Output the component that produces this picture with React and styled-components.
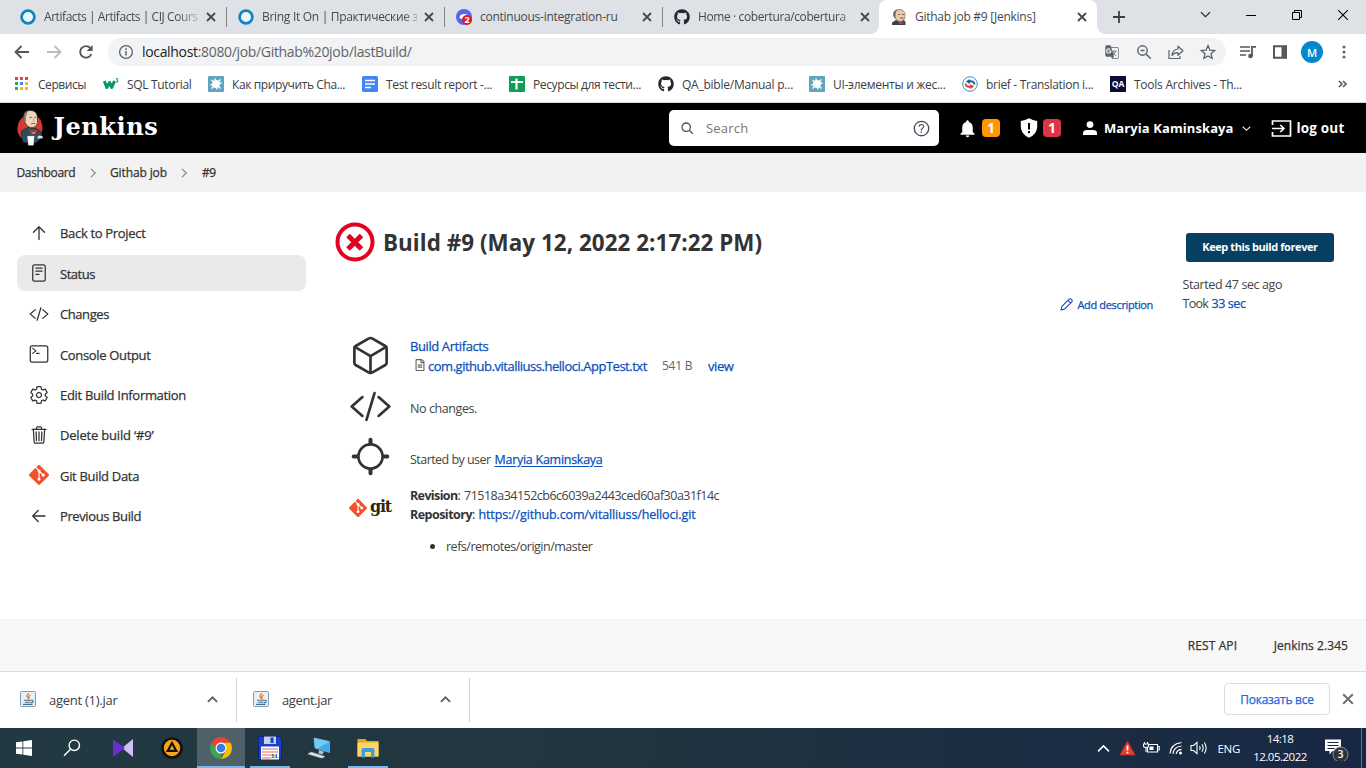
import React from "react";
import styled, { createGlobalStyle, css } from "styled-components";
import {
  IoReaderOutline,
  IoCodeSlashOutline,
  IoTerminalOutline,
  IoSettingsOutline,
  IoTrashOutline,
  IoCubeOutline,
  IoLocateOutline,
  IoHelpCircleOutline,
} from "react-icons/io5";
import { MdNotifications, MdOutlineGTranslate } from "react-icons/md";
import { FaGithub, FaRegFileAlt } from "react-icons/fa";
import { SiGit } from "react-icons/si";

const GlobalStyle = createGlobalStyle`
  * { box-sizing: border-box; }
  body {
    margin: 0;
    background: #fff;
    color: #333;
    font-family: "Open Sans", "Noto Sans", sans-serif;
    overflow: hidden;
  }
  svg { display: block; flex: none; }
`;

const Screen = styled.div`
  width: 1366px;
  height: 768px;
  display: flex;
  flex-direction: column;
`;

const Text = styled.span`
  font-size: ${(p) => p.$size || 12}px;
  font-weight: ${(p) => p.$weight || 400};
  letter-spacing: ${(p) => p.$track || 0}px;
  color: ${(p) => p.$color || "inherit"};
  white-space: nowrap;
  ${(p) => p.$medium && css`-webkit-text-stroke: 0.25px currentColor;`}
`;

/* ---------- browser tabs ---------- */

const TabStrip = styled.div`
  height: 34px;
  flex: none;
  background: #dee1e6;
  display: flex;
  padding-left: 9px;
  color: #45494d;
`;

const Tab = styled.div`
  width: ${(p) => p.$width || 218}px;
  height: 34px;
  display: flex;
  align-items: center;
  padding-left: 11px;
  position: relative;
  ${(p) =>
    p.$active
      ? css`
          background: #fff;
          border-radius: 8px 8px 0 0;
          padding-left: 12px;
          &::before, &::after {
            content: "";
            position: absolute;
            bottom: 0;
            width: 8px;
            height: 8px;
          }
          &::before { left: -8px; background: radial-gradient(circle at 0 0, transparent 7.5px, #fff 8px); }
          &::after { right: -8px; background: radial-gradient(circle at 100% 0, transparent 7.5px, #fff 8px); }
        `
      : !p.$last &&
        css`
          &::after {
            content: "";
            position: absolute;
            right: 0;
            top: 7px;
            width: 1px;
            height: 20px;
            background: #808387;
          }
        `}
`;

const TabTitle = styled.div`
  width: 155px;
  margin-left: 8px;
  display: flex;
  line-height: 20px;
  ${(p) => p.$fade && css`mask-image: linear-gradient(90deg, #000 ${p.$fade}px, transparent 162px);`}
`;

const TabClose = styled.div`
  margin-left: 6.5px;
`;

const NewTab = styled.div`
  width: 44px;
  display: flex;
  align-items: center;
  justify-content: center;
`;

const WindowButtons = styled.div`
  margin-left: auto;
  display: flex;
  height: 29px;
`;

const WindowButton = styled.div`
  width: 46px;
  display: flex;
  align-items: center;
  justify-content: center;
`;

/* ---------- toolbar and bookmarks ---------- */

const Toolbar = styled.div`
  height: 36px;
  flex: none;
  display: flex;
  align-items: center;
  padding-left: 12px;
`;

const NavButton = styled.div`
  width: 20px;
  height: 20px;
  margin-right: 12px;
  display: flex;
  align-items: center;
  justify-content: center;
`;

const AddressBar = styled.div`
  width: 1118px;
  height: 28px;
  border-radius: 14px;
  background: #f1f3f4;
  display: flex;
  align-items: center;
  padding: 0 9px 0 10px;
`;

const AddressText = styled.div`
  margin: -1px 0 0 8px;
  line-height: 20px;
  display: flex;
`;

const AddressActions = styled.div`
  margin-left: auto;
  display: flex;
  align-items: center;
  gap: 14px;
  svg { width: 18px; }
`;

const ToolbarActions = styled.div`
  display: flex;
  align-items: center;
  padding-left: 10px;
`;

const Avatar = styled.div`
  width: 22px;
  height: 22px;
  border-radius: 50%;
  background: #0288d1;
  color: #fff;
  display: flex;
  align-items: center;
  justify-content: center;
  margin: 0 19px 0 13px;
`;

const Bookmarks = styled.div`
  height: 33px;
  flex: none;
  border-bottom: 1px solid #dadce0;
  display: flex;
  padding: 0 0 4px 13px;
  color: #3c4043;
`;

const Bookmark = styled.div`
  width: ${(p) => p.$width}px;
  display: flex;
  align-items: center;
  gap: ${(p) => p.$gap || 8}px;
`;

/* ---------- Jenkins header ---------- */

const Header = styled.header`
  height: 50px;
  flex: none;
  background: #000;
  color: #fff;
  display: flex;
  align-items: center;
  padding-left: 16px;
`;

const Brand = styled.div`
  margin: -2px 0 0 9.5px;
  width: 615.5px;
  font: 700 24px/46px "DejaVu Serif", serif;
  letter-spacing: 0.6px;
`;

const SearchBox = styled.div`
  width: 270px;
  height: 36px;
  border-radius: 5px;
  background: #fff;
  display: flex;
  align-items: center;
  padding: 0 7px 0 12px;
`;

const SearchHint = styled.div`
  flex: 1;
  margin: -1px 0 0 12px;
  line-height: 36px;
`;

const HeaderItem = styled.div`
  display: flex;
  align-items: center;
  margin-left: ${(p) => p.$left}px;
  width: ${(p) => p.$width}px;
`;

const Badge = styled.div`
  width: 18px;
  height: 18px;
  border-radius: 4px;
  background: ${(p) => p.$color};
  font-size: 14px;
  font-weight: 700;
  line-height: 18px;
  text-align: center;
  margin-left: ${(p) => p.$left}px;
`;

const Breadcrumbs = styled.nav`
  height: 39px;
  flex: none;
  background: #f2f2f2;
  display: flex;
  align-items: center;
  padding-left: 16.5px;
`;

const Crumb = styled.div`
  width: ${(p) => p.$width}px;
  line-height: 39px;
  display: flex;
`;

const CrumbSeparator = styled.div`
  width: ${(p) => p.$width}px;
`;

/* ---------- page body ---------- */

const Page = styled.main`
  height: 427px;
  flex: none;
  display: flex;
`;

const Sidebar = styled.aside`
  width: 335px;
  padding: 22.8px 29px 0 17px;
  display: flex;
  flex-direction: column;
  gap: 4.45px;
`;

const SideItem = styled.div`
  height: 36px;
  flex: none;
  border-radius: 8px;
  background: ${(p) => (p.$active ? "#eaeaea" : "transparent")};
  display: flex;
  align-items: center;
  padding-left: 12px;
  gap: 11px;
`;

const SideLabel = styled.div`
  padding-top: 1px;
  line-height: 20px;
  display: flex;
`;

const BuildPanel = styled.section`
  width: 819px;
  padding-top: 30px;
`;

const TitleRow = styled.div`
  height: 40px;
  display: flex;
  align-items: center;
  gap: 8px;
`;

const Title = styled.h1`
  margin: 0;
  padding-top: 2px;
  font-size: 22.4px;
  font-weight: 700;
  line-height: 30px;
  letter-spacing: 0.05px;
`;

const DescriptionRow = styled.div`
  margin: 32px 1px 20px 0;
  height: 20px;
  display: flex;
  align-items: center;
  justify-content: flex-end;
  gap: 4px;
  color: #0b50b8;
`;

const Summary = styled.div`
  display: grid;
  grid-template-columns: 75px 1fr;
  grid-auto-rows: 51px 50px 51px 80px;
`;

const SummaryIcon = styled.div`
  padding: ${(p) => p.$top || 0}px 0 0 14px;
`;

const SummaryBody = styled.div`
  padding-top: ${(p) => p.$top || 0}px;
`;

const Line = styled.div`
  height: ${(p) => p.$height || 20}px;
  line-height: ${(p) => p.$height || 20}px;
  display: flex;
  align-items: center;
  white-space: pre;
`;

const Segment = styled.div`
  width: ${(p) => p.$width}px;
  display: flex;
`;

const ArtifactIcon = styled.div`
  width: 18px;
  padding: 0 0 2px 4px;
`;

const BranchList = styled.ul`
  margin: 13px 0 0;
  padding: 0 0 0 36px;
  font-size: 13px;
  line-height: 19px;
`;

const GitLogo = styled.div`
  display: flex;
  align-items: center;
  gap: 3px;
  height: 20px;
  color: #362701;
`;

const GitWord = styled.span`
  margin-top: -3px;
  font: 700 16px/20px "DejaVu Serif", serif;
  letter-spacing: -1.2px;
`;

const Link = styled(Text).attrs({ $medium: true })`
  color: #0b50b8;
`;

const UserLink = styled(Link)`
  text-decoration: underline;
  text-underline-offset: 2px;
`;

const SidePanel = styled.section`
  padding: 41px 0 0 28.5px;
`;

const KeepButton = styled.button`
  width: 148px;
  height: 29px;
  margin: 0 0 13px 3.5px;
  padding: 0 0 2px;
  border: 0;
  border-radius: 3px;
  background: #073f63;
  color: #fff;
  font-family: inherit;
  display: flex;
  align-items: center;
  justify-content: center;
`;

const PageFooter = styled.footer`
  height: 52px;
  flex: none;
  background: #f8f8f8;
  border-top: 1px solid #f1f1f1;
  display: flex;
  justify-content: flex-end;
  align-items: center;
  gap: 36.5px;
  padding-right: 18px;
`;

/* ---------- downloads ---------- */

const DownloadBar = styled.div`
  height: 57px;
  flex: none;
  border-top: 1px solid #dadce0;
  display: flex;
  align-items: center;
  color: #3c4043;
`;

const Download = styled.div`
  width: ${(p) => p.$width}px;
  height: 44px;
  border-right: 1px solid #cfd1d4;
  padding: 0 18px 2px ${(p) => p.$left}px;
  display: flex;
  align-items: center;
`;

const DownloadName = styled.div`
  flex: 1;
  margin-left: 13px;
  padding-top: 2px;
  display: flex;
`;

const ShowAll = styled.div`
  width: 106px;
  height: 32px;
  margin: 0 12px 2px auto;
  border: 1px solid #dadce0;
  border-radius: 4px;
  color: #1a67e0;
  line-height: 29px;
  text-align: center;
`;

const DownloadClose = styled.div`
  width: 24px;
  padding-bottom: 2px;
`;

/* ---------- taskbar ---------- */

const Taskbar = styled.div`
  height: 40px;
  flex: none;
  background: linear-gradient(90deg, #233942 0%, #21363f 40%, #1b2d42 75%, #182844 100%);
  color: #fff;
  display: flex;
`;

const Task = styled.div`
  width: 48px;
  height: 40px;
  margin-right: ${(p) => p.$gap ?? 1}px;
  display: flex;
  align-items: center;
  justify-content: center;
  background: ${(p) => (p.$active ? "#4f6069" : "transparent")};
  position: relative;
  &::after {
    content: "";
    display: ${(p) => (p.$open ? "block" : "none")};
    position: absolute;
    bottom: 0;
    left: ${(p) => (p.$active ? 0 : 4)}px;
    right: ${(p) => (p.$active ? 0 : 4)}px;
    height: 2px;
    background: #76b9ed;
  }
`;

const Tray = styled.div`
  margin-left: auto;
  display: flex;
  align-items: center;
`;

const TrayIcon = styled.div`
  width: ${(p) => p.$width}px;
`;

const Clock = styled.div`
  width: 80px;
  margin-right: 4px;
  display: flex;
  flex-direction: column;
  align-items: center;
  line-height: 18px;
`;

const DesktopEdge = styled.div`
  width: 5px;
  height: 40px;
  border-left: 1px solid #67738a;
`;

/* ---------- drawings ---------- */

const Cross = ({ size = 10, width = 1.8, color = "#45494d" }) => (
  <svg width={size} height={size} viewBox="0 0 10 10">
    <path d="M1 1l8 8M9 1l-8 8" stroke={color} strokeWidth={width} />
  </svg>
);

const Ring = () => (
  <svg width="16" height="16" viewBox="0 0 16 16">
    <circle cx="8" cy="8" r="6.4" fill="#eaf6fb" stroke="#0e86c0" strokeWidth="2.7" />
  </svg>
);

const ChatIcon = () => (
  <svg width="16" height="16" viewBox="0 0 16 16">
    <circle cx="8" cy="8" r="8" fill="#5865f2" />
    <path d="M3.500 9Q3.500 5 8 5t4.500 3L8 11z" fill="#fff" />
    <circle cx="11" cy="11" r="5" fill="#e01b1b" />
    <text x="11" y="14.200" fontSize="9" fontWeight="700" fill="#fff" textAnchor="middle" fontFamily="Open Sans">2</text>
  </svg>
);

const ButlerFace = () => (
  <svg width="16" height="16" viewBox="0 0 16 16">
    <path d="M1 16v-2.500l4-2.500 4 2 4-2 1.500 2v3z" fill="#2f4552" />
    <path d="M2.500 6Q2 .6 8 .5T14 6Q14.300 12.300 9 12.500 4.500 12 4 8z" fill="#e9c9a8" stroke="#4b3f37" strokeWidth=".5" />
    <path d="M2.300 7Q1.500 1 7 .4L5.500 2.200Q4 4 4.500 7.500L3.800 10z" fill="#77706a" />
    <path d="M7 5.500h2M11 5.500h2M9 9.200q2-1 3.500.2" stroke="#5a463b" strokeWidth=".8" fill="none" />
    <path d="M8 12.500l2.200 1 2.300-1v3l-2.300-1-2.200 1z" fill="#d33833" />
  </svg>
);

const Butler = () => (
  <svg width="28" height="38" viewBox="0 0 28 38">
    <path d="M14 6Q26 6 26.500 19 26 26 23.500 29L5 29Q1 24 1.500 19 2.500 7 14 6z" fill="#d33833" />
    <path d="M7.500 33.500Q4 27 5.500 22L12 18.500l8 1 5 3.500-.5 4.500q-1 4-5 6.500z" fill="#2f4c5c" stroke="#1c2b34" strokeWidth=".8" />
    <path d="M13.500 19.500l2.500 4.500 3-3 .3 3.500h-4z" fill="#f4f4f4" />
    <path d="M8 9.500Q7 1.700 14 1.400 21 1.400 21.400 8 22.500 14.500 20 17.300 15.800 20.300 12 17.500 8.500 14.500 8 9.500z" fill="#f0d6b7" stroke="#3d3129" strokeWidth=".8" />
    <path d="M8 12Q5.800 3 12.500 1.800L11 4Q9.300 7 10 12z" fill="#7c756e" />
    <path d="M13.500 8.700q1.500-1 2.700 0M18.300 8.700q1-.8 2 0M15 15q2.500-1.600 4.500 0" stroke="#3d3129" strokeWidth=".7" fill="none" />
    <path d="M17.300 9.500l1 2.500-1 .3" stroke="#a88a6c" strokeWidth=".6" fill="none" />
    <path d="M14.500 20.500l3 1.300 3.500-1.600v4.200l-3.500-1.300-3 1.400z" fill="#d33833" stroke="#7c1a1a" strokeWidth=".4" />
    <path d="M11.300 27h7l-.8 9.300h-5.200z" fill="#fff" stroke="#999" strokeWidth=".4" />
    <path d="M21.500 27.500q2-2 5-.3l.3 2-5 .6z" fill="#e9e9e9" stroke="#777" strokeWidth=".4" />
  </svg>
);

const W3Icon = () => (
  <svg width="16" height="16" viewBox="0 0 16 16">
    <path d="M1.300 5l2.500 6.500L6.500 6.500l2.300 5L11.500 5" fill="none" stroke="#059862" strokeWidth="3" strokeLinejoin="round" />
    <path d="M12.800 2.700h2.200l-1.200 1.500q1.600.2 1.200 1.600-.8.900-2.300.2" fill="none" stroke="#059862" strokeWidth=".9" />
  </svg>
);

const AppsIcon = () => (
  <svg width="16" height="16" viewBox="0 0 16 16">
    {["#ea4335", "#ea4335", "#ea4335", "#34a853", "#4285f4", "#fbbc04", "#34a853", "#fbbc04", "#fbbc04"].map((c, i) => (
      <rect key={i} x={2 + (i % 3) * 5} y={1 + Math.floor(i / 3) * 5} width="3" height="3" fill={c} />
    ))}
  </svg>
);

const SplashIcon = () => (
  <svg width="16" height="16" viewBox="0 0 16 16">
    <rect width="16" height="16" rx="1" fill="#62a3bf" />
    <circle cx="8" cy="8" r="3.900" fill="#fff" />
    <path d="M7 2.500l2 11M2.500 9l11-2M3.500 4l9 8.500M12.500 3.500l-9 9" stroke="#fff" strokeWidth="1.300" />
  </svg>
);

const DocIcon = () => (
  <svg width="16" height="16" viewBox="0 0 16 16">
    <rect width="16" height="16" rx="1.500" fill="#4285f4" />
    <path d="M3 4.500h10M3 8h10M3 11.500h6" stroke="#fff" strokeWidth="1.600" />
  </svg>
);

const SheetIcon = () => (
  <svg width="16" height="16" viewBox="0 0 16 16">
    <rect width="16" height="16" rx="1" fill="#0f9d58" />
    <path d="M2 6h12M7.500 2.500v11" stroke="#fff" strokeWidth="2.200" />
  </svg>
);

const SyncIcon = () => (
  <svg width="16" height="16" viewBox="0 0 16 16">
    <circle cx="8" cy="8" r="7.300" fill="#fff" stroke="#3b8fc9" strokeWidth="1" />
    <path d="M12.500 8.500Q12 4.500 6.500 5.300" fill="none" stroke="#12619e" strokeWidth="2" />
    <path d="M3.800 5.500l4-2.500v5z" fill="#12619e" />
    <path d="M3.500 7.500Q4 11.500 9.500 10.700" fill="none" stroke="#e2432f" strokeWidth="2" />
    <path d="M12.200 10.500l-4 2.500V8z" fill="#e2432f" />
  </svg>
);

const QaIcon = () => (
  <svg width="16" height="16" viewBox="0 0 16 16">
    <rect width="16" height="16" fill="#0a0a33" />
    <text x="8" y="11.300" fontSize="8.500" fontWeight="700" fill="#fff" textAnchor="middle" fontFamily="Open Sans">QA</text>
  </svg>
);

const BackArrow = ({ color = "#54575b", flip }) => (
  <svg width="16" height="16" viewBox="0 0 16 16">
    <path d={flip ? "M1 8h13M8.500 2l6 6-6 6" : "M15 8H2M7.500 2l-6 6 6 6"} fill="none" stroke={color} strokeWidth="1.800" />
  </svg>
);

const ThinArrow = ({ left }) => (
  <svg width="20" height="20" viewBox="0 0 20 20" fill="none" stroke="#333" strokeWidth="1.300" strokeLinecap="round" strokeLinejoin="round">
    <path d={left ? "M16 10H4M9.200 4.500L3.700 10l5.500 5.500" : "M10 16.500V4M4.500 9.200L10 3.700l5.500 5.500"} />
  </svg>
);

const ReloadIcon = () => (
  <svg width="16" height="16" viewBox="0 0 16 16">
    <path d="M13.300 10.200A5.800 5.800 0 1 1 12.300 4" fill="none" stroke="#54575b" strokeWidth="1.900" />
    <path d="M14.600 1v6H8.600z" fill="#54575b" />
  </svg>
);

const InfoIcon = () => (
  <svg width="16" height="16" viewBox="0 0 16 16">
    <circle cx="8" cy="8" r="6.400" fill="none" stroke="#5f6368" strokeWidth="1.300" />
    <path d="M8 7v4.500M8 4.300v1.600" stroke="#5f6368" strokeWidth="1.500" />
  </svg>
);

const ZoomOutIcon = () => (
  <svg width="18" height="18" viewBox="0 0 18 18">
    <circle cx="7.500" cy="7.500" r="4.700" fill="none" stroke="#5f6368" strokeWidth="1.400" />
    <path d="M5.500 7.500h4M11 11l4.800 4.800" stroke="#5f6368" strokeWidth="1.500" />
  </svg>
);

const ShareIcon = () => (
  <svg width="18" height="18" viewBox="0 0 18 18" fill="none" stroke="#5f6368" strokeWidth="1.200">
    <path d="M2 7v8.500h11V13" />
    <path d="M5 12.500Q5.500 6.500 11 6V3.200l5 4.600-5 4.500V9.600Q7 9.500 5 12.500z" strokeLinejoin="round" />
  </svg>
);

const StarIcon = () => (
  <svg width="18" height="18" viewBox="0 0 18 18">
    <path d="M9 2.600l1.900 4.500 4.800.4-3.700 3.200 1.100 4.700L9 12.900l-4.100 2.500L6 10.700 2.300 7.500l4.800-.4z" fill="none" stroke="#5f6368" strokeWidth="1.300" />
  </svg>
);

const PlaylistIcon = () => (
  <svg width="22" height="18" viewBox="0 0 22 18">
    <path d="M4 4h10M4 8h10M4 12h6" stroke="#54575b" strokeWidth="1.700" />
    <path d="M16 13V3.800h4" stroke="#54575b" strokeWidth="1.800" fill="none" />
    <circle cx="14.500" cy="13" r="2.300" fill="#54575b" />
  </svg>
);

const SidePanelIcon = () => (
  <svg width="16" height="16" viewBox="0 0 16 16">
    <path d="M2 2.200h12v11.600H2z" fill="none" stroke="#54575b" strokeWidth="2" />
    <path d="M9.500 2h5v12h-5z" fill="#54575b" />
  </svg>
);

const MoreIcon = () => (
  <svg width="4" height="16" viewBox="0 0 4 16" fill="#5f6368">
    <circle cx="2" cy="3" r="1.500" />
    <circle cx="2" cy="8" r="1.500" />
    <circle cx="2" cy="13" r="1.500" />
  </svg>
);

const Chevron = ({ d = "down", size = 10, color = "currentColor", width = 1.2 }) => (
  <svg width={size} height={size} viewBox="0 0 10 10">
    <path
      d={{ down: "M.8 2.800L5 7l4.200-4.200", up: "M.8 7.200L5 3l4.200 4.200", right: "M3 .8L7.200 5 3 9.200" }[d]}
      fill="none"
      stroke={color}
      strokeWidth={width}
    />
  </svg>
);

const ShieldIcon = () => (
  <svg width="18" height="20" viewBox="0 0 18 20">
    <path d="M9 .3q3.700 2 8.200 2.700v6Q17 16 9 19.800 1 16 .8 9V3Q5.300 2.300 9 .3z" fill="#fff" />
    <path d="M9 5v6.500M9 13v2.300" stroke="#000" strokeWidth="2" />
  </svg>
);

const PersonIcon = () => (
  <svg width="14" height="14" viewBox="0 0 14 14" fill="#fff">
    <circle cx="7" cy="3.600" r="3.400" />
    <path d="M0 14v-2q0-3 4-3h6q4 0 4 3v2z" />
  </svg>
);

const LogoutIcon = () => (
  <svg width="21" height="17" viewBox="0 0 21 17" fill="none" stroke="#fff" strokeWidth="1.700">
    <path d="M1.500 5V1h18v15h-18v-4" />
    <path d="M1 8.500h11.500M9.300 5l3.600 3.500L9.300 12" />
  </svg>
);

const SearchGlyph = () => (
  <svg width="13" height="13" viewBox="0 0 13 13" fill="none" stroke="#4d545d" strokeWidth="1.300">
    <circle cx="5.200" cy="5.200" r="4.200" />
    <path d="M8.300 8.300L11.800 11.800" />
  </svg>
);

const PencilIcon = () => (
  <svg width="13" height="13" viewBox="0 0 13 13" fill="none" stroke="#0b50b8" strokeWidth="1.100" strokeLinejoin="round">
    <path d="M1 12l.9-3.600L9.200 1.100q1-.8 2 .1l.6.600q.9 1 0 2L4.600 11.100z" />
    <path d="M8 2.400l2.700 2.700" />
  </svg>
);

const FailedIcon = () => (
  <svg width="40" height="40" viewBox="0 0 40 40">
    <circle cx="20" cy="20" r="17.500" fill="none" stroke="#e6001f" strokeWidth="4" />
    <path d="M13 13.500l13.500 13.500M26.500 13.500l-13.500 13.500" stroke="#e6001f" strokeWidth="5" />
  </svg>
);

const JavaIcon = () => (
  <svg width="16" height="16" viewBox="0 0 16 16">
    <rect x=".5" y=".5" width="15" height="15" rx="1" fill="#e9f0f5" stroke="#7d9cb3" />
    <path d="M9 2.500Q6 4.500 7.500 6T7.800 8.300M10.500 4Q8 5.500 9.500 7.500" stroke="#e8731c" strokeWidth="1.200" fill="none" />
    <path d="M4 9.300h7M5 11.300h5.500M3 13.400h9.500M11 9.300q2.600-.3 2.200 1.200t-2.200 1" stroke="#41718f" strokeWidth="1.100" fill="none" />
  </svg>
);

const WindowsIcon = () => (
  <svg width="16" height="16" viewBox="0 0 16 16" fill="#fff">
    <path d="M0 2.300l6.500-.9v6.200H0zM7.300 1.300L16 0v7.600H7.300zM0 8.400h6.500v6.200L0 13.700zM7.300 8.400H16V16l-8.700-1.300z" />
  </svg>
);

const TaskSearchIcon = () => (
  <svg width="18" height="18" viewBox="0 0 18 18" fill="none" stroke="#fff" strokeWidth="1.400">
    <circle cx="11.300" cy="6.300" r="5.200" />
    <path d="M7.500 10.200L1 16.800" />
  </svg>
);

const VsIcon = () => (
  <svg width="22" height="20" viewBox="0 0 22 20">
    <path d="M21 1v18l-11-9z" fill="#d3bdf5" />
    <path d="M1 1.500L13 10 1 19z" fill="#6a2fd0" />
  </svg>
);

const AimpIcon = () => (
  <svg width="22" height="22" viewBox="0 0 22 22">
    <circle cx="11" cy="11" r="10.800" fill="#111" />
    <circle cx="11" cy="11" r="8.200" fill="#f9a51a" />
    <path d="M11 6l4.300 7.900h-8.600z" fill="none" stroke="#111" strokeWidth="2.200" />
  </svg>
);

const ChromeIcon = () => (
  <svg width="24" height="24" viewBox="0 0 24 24">
    <path d="M12 12v11A11 11 0 0 1 2.500 6.500z" fill="#34a853" />
    <path d="M12 6.500h9.500A11 11 0 0 1 12 23l4.800-8.200z" fill="#fbbc05" />
    <path d="M2.500 6.500A11 11 0 0 1 21.500 6.500H12L7.200 14.800z" fill="#ea4335" />
    <circle cx="12" cy="12" r="5.500" fill="#fff" />
    <circle cx="12" cy="12" r="4.300" fill="#2f7de9" />
  </svg>
);

const FloppyIcon = () => (
  <svg width="24" height="24" viewBox="0 0 24 24">
    <path d="M.5 .5h21L23.500 3v20.500H.5z" fill="#1741c9" stroke="#0b2585" />
    <path d="M6 .5h12v7.500H6z" fill="#c9d0de" />
    <path d="M12.500 1.500h3v5.500h-3z" fill="#1741c9" />
    <path d="M3 10.500h18v13H3z" fill="#fff" />
    <path d="M4 13h16M4 16h16M4 19h9M4 22h9" stroke="#f09a9a" strokeWidth="1.300" />
    <text x="16.500" y="21.500" fontSize="5.500" fontWeight="700" fill="#333" textAnchor="middle" fontFamily="Liberation Mono">51</text>
  </svg>
);

const ComputerIcon = () => (
  <svg width="24" height="22" viewBox="0 0 24 22">
    <path d="M7 1l15.500 3.500v11L8 11z" fill="#37b0f2" stroke="#9ba7b1" strokeWidth=".8" />
    <path d="M7 1l15.500 3.500-12 7L8 11z" fill="#6fcbfa" />
    <path d="M12 13l5 1.800-1.500 2.700-4-1z" fill="#b9c1c8" />
    <path d="M4 15l14 4.500-3 1.700L.8 17z" fill="#e3e7ea" stroke="#98a2aa" strokeWidth=".6" />
  </svg>
);

const FolderIcon = () => (
  <svg width="22" height="20" viewBox="0 0 22 20">
    <path d="M.5 1h8l1.500 2h11.500v15.500H.5z" fill="#e8a812" />
    <path d="M.5 4.500h21v14H.5z" fill="#fdd668" />
    <path d="M4.500 19.500v-8q0-1.500 1.500-1.500h10q1.500 0 1.500 1.500v8h-3.500V14h-6v5.500z" fill="#3f9ddf" />
  </svg>
);

const WarningIcon = () => (
  <svg width="17" height="16" viewBox="0 0 17 16">
    <path d="M8.500 1l7.700 14H.8z" fill="#e2412e" stroke="#b02a1c" strokeWidth=".8" strokeLinejoin="round" />
    <path d="M8.500 5.500v5M8.500 11.700v1.700" stroke="#fff" strokeWidth="1.700" />
  </svg>
);

const BatteryIcon = () => (
  <svg width="17" height="14" viewBox="0 0 17 14" fill="none" stroke="#fff" strokeWidth="1.100">
    <path d="M4.500 3.500h10v7.500h-10zM15 5.500h1.200v3.500H15" />
    <path d="M6.500 5.500h4v3.500h-4z" fill="#fff" stroke="none" />
    <path d="M1.500 1v2M4.500 1v2M.5 3h5v2q0 1.500-2.500 1.500T.5 5zM3 6.500V11" fill="#1b2c43" />
  </svg>
);

const WifiIcon = () => (
  <svg width="14" height="14" viewBox="0 0 14 14" fill="none" stroke="#fff" strokeWidth="1.200">
    <path d="M1 12.500Q1.500 3 12.500 1.500M4 12.800Q4.500 6 12.500 5M7.200 13Q7.500 9 12.500 8.300" />
    <circle cx="11.500" cy="12" r="1.500" fill="#fff" stroke="none" />
  </svg>
);

const SoundIcon = () => (
  <svg width="18" height="14" viewBox="0 0 18 14" fill="none" stroke="#fff" strokeWidth="1.100">
    <path d="M1 4.500h2.500L7 1.500v11L3.500 9.500H1z" />
    <path d="M9.500 5q1.200 2 0 4M12 3.300q2.300 3.700 0 7.400M14.300 1.500q3.700 5.500 0 11" />
  </svg>
);

const NoticeIcon = () => (
  <svg width="26" height="26" viewBox="0 0 26 26">
    <path d="M1 4.500h16v11.500H8.500L5.500 19.500v-3.500H1z" fill="#fff" />
    <path d="M3.500 7.500h11M3.500 10.500h11M3.500 13.500h7" stroke="#182844" strokeWidth="1" />
    <circle cx="16.500" cy="19.500" r="7.500" fill="#2e333a" stroke="#8b9099" strokeWidth="1" />
    <text x="16.500" y="23.300" fontSize="10.500" fontWeight="600" fill="#fff" textAnchor="middle" fontFamily="Open Sans">3</text>
  </svg>
);

/* ---------- content ---------- */

const TABS = [
  { icon: <Ring />, title: "Artifacts | Artifacts | CIJ Cours", track: -0.44, fade: 132 },
  { icon: <Ring />, title: "Bring It On | Практические з", track: -0.3, fade: 142 },
  { icon: <ChatIcon />, title: "continuous-integration-ru", track: -0.26 },
  { icon: <FaGithub size={16} color="#24292f" />, title: "Home · cobertura/cobertura", track: -0.39, fade: 140 },
];

const BOOKMARKS = [
  { icon: <AppsIcon />, label: "Сервисы", width: 90, track: -0.45, gap: 9 },
  { icon: <W3Icon />, label: "SQL Tutorial", width: 105, track: -0.32 },
  { icon: <SplashIcon />, label: "Как приручить Cha...", width: 154, track: -0.39 },
  { icon: <DocIcon />, label: "Test result report -...", width: 147, track: -0.32 },
  { icon: <SheetIcon />, label: "Ресурсы для тести...", width: 149, track: -0.38 },
  { icon: <FaGithub size={16} color="#24292f" />, label: "QA_bible/Manual p...", width: 151, track: -0.24 },
  { icon: <SplashIcon />, label: "UI-элементы и жес...", width: 153, track: -0.28 },
  { icon: <SyncIcon />, label: "brief - Translation i...", width: 148, track: -0.3 },
  { icon: <QaIcon />, label: "Tools Archives - Th...", width: 228, track: -0.25 },
];

const MENU = [
  { icon: <ThinArrow />, label: "Back to Project", track: -0.32 },
  { icon: <IoReaderOutline size={20} />, label: "Status", track: -0.46, active: true },
  { icon: <IoCodeSlashOutline size={20} />, label: "Changes", track: -0.42 },
  { icon: <IoTerminalOutline size={20} />, label: "Console Output", track: -0.34 },
  { icon: <IoSettingsOutline size={20} />, label: "Edit Build Information", track: -0.31 },
  { icon: <IoTrashOutline size={20} />, label: "Delete build ‘#9’", track: -0.19 },
  { icon: <SiGit size={20} color="#f4502b" />, label: "Git Build Data", track: -0.32 },
  { icon: <ThinArrow left />, label: "Previous Build", track: -0.39 },
];

export default function App() {
  return (
    <>
      <GlobalStyle />
      <Screen>
        <TabStrip>
          {TABS.map((t, i) => (
            <Tab key={i} $last={i === 3} $width={i === 3 ? 216 : 218}>
              {t.icon}
              <TabTitle $fade={t.fade}>
                <Text $track={t.track}>{t.title}</Text>
              </TabTitle>
              <TabClose><Cross /></TabClose>
            </Tab>
          ))}
          <Tab $active>
            <ButlerFace />
            <TabTitle>
              <Text $track={-0.26}>Githab job #9 [Jenkins]</Text>
            </TabTitle>
            <TabClose><Cross /></TabClose>
          </Tab>
          <NewTab>
            <svg width="12" height="12" viewBox="0 0 12 12">
              <path d="M6 0v12M0 6h12" stroke="#3c4043" strokeWidth="1.800" />
            </svg>
          </NewTab>
          <WindowButtons>
            <WindowButton><Chevron size={11} color="#222" width={1} /></WindowButton>
            <WindowButton>
              <svg width="10" height="10" viewBox="0 0 10 10"><path d="M0 5.500h10" stroke="#000" /></svg>
            </WindowButton>
            <WindowButton>
              <svg width="10" height="10" viewBox="0 0 10 10" fill="none" stroke="#000">
                <path d="M.5 2.500h7v7h-7zM2.500 2.500v-2h7v7h-2" />
              </svg>
            </WindowButton>
            <WindowButton><Cross size={12} width={0.9} color="#000" /></WindowButton>
          </WindowButtons>
        </TabStrip>

        <Toolbar>
          <NavButton><BackArrow /></NavButton>
          <NavButton><BackArrow flip color="#b9bbbe" /></NavButton>
          <NavButton><ReloadIcon /></NavButton>
          <AddressBar>
            <InfoIcon />
            <AddressText>
              <Text $size={14} $track={-0.33} $color="#202124">localhost</Text>
              <Text $size={14} $track={-0.33} $color="#5f6368">:8080/job/Githab%20job/lastBuild/</Text>
            </AddressText>
            <AddressActions>
              <MdOutlineGTranslate size={16} color="#5f6368" />
              <ZoomOutIcon />
              <ShareIcon />
              <StarIcon />
            </AddressActions>
          </AddressBar>
          <ToolbarActions>
            <PlaylistIcon />
            <Segment $width={14} />
            <SidePanelIcon />
            <Avatar><Text $size={11} $weight={600}>M</Text></Avatar>
            <MoreIcon />
          </ToolbarActions>
        </Toolbar>

        <Bookmarks>
          {BOOKMARKS.map((b) => (
            <Bookmark key={b.label} $width={b.width} $gap={b.gap}>
              {b.icon}
              <Text $track={b.track}>{b.label}</Text>
            </Bookmark>
          ))}
          <Bookmark>
            <svg width="10" height="8" viewBox="0 0 10 8">
              <path d="M1 1l3 3-3 3M5 1l3 3-3 3" fill="none" stroke="#54575b" strokeWidth="1.600" />
            </svg>
          </Bookmark>
        </Bookmarks>

        <Header>
          <Butler />
          <Brand>Jenkins</Brand>
          <SearchBox>
            <SearchGlyph />
            <SearchHint><Text $size={13} $track={0.22} $color="#757575">Search</Text></SearchHint>
            <IoHelpCircleOutline size={21} color="#454c5c" />
          </SearchBox>
          <HeaderItem $left={18} $width={44}>
            <MdNotifications size={21} />
            <Badge $color="#ff9800" $left={4}>1</Badge>
          </HeaderItem>
          <HeaderItem $left={19} $width={42}>
            <ShieldIcon />
            <Badge $color="#dc3545" $left={5}>1</Badge>
          </HeaderItem>
          <HeaderItem $left={21} $width={170}>
            <PersonIcon />
            <Segment $width={7} />
            <Text $size={13} $weight={700} $track={0.09}>Maryia Kaminskaya</Text>
            <Segment $width={8} />
            <Chevron size={9} />
          </HeaderItem>
          <HeaderItem $left={18} $width={80}>
            <LogoutIcon />
            <Segment $width={4.5} />
            <Text $size={13.5} $weight={700} $track={0.18}>log out</Text>
          </HeaderItem>
        </Header>

        <Breadcrumbs>
          <Crumb $width={71.5}><Text $medium $track={-0.34}>Dashboard</Text></Crumb>
          <CrumbSeparator $width={22}><Chevron d="right" color="#888" /></CrumbSeparator>
          <Crumb $width={69}><Text $medium $track={-0.12}>Githab job</Text></Crumb>
          <CrumbSeparator $width={23}><Chevron d="right" color="#888" /></CrumbSeparator>
          <Crumb><Text $medium $track={-0.55}>#9</Text></Crumb>
        </Breadcrumbs>

        <Page>
          <Sidebar>
            {MENU.map((m) => (
              <SideItem key={m.label} $active={m.active}>
                {m.icon}
                <SideLabel><Text $size={13} $medium $track={m.track}>{m.label}</Text></SideLabel>
              </SideItem>
            ))}
          </Sidebar>

          <BuildPanel>
            <TitleRow>
              <FailedIcon />
              <Title>Build #9 (May 12, 2022 2:17:22 PM)</Title>
            </TitleRow>
            <DescriptionRow>
              <PencilIcon />
              <Link $size={11} $track={-0.35}>Add description</Link>
            </DescriptionRow>
            <Summary>
              <SummaryIcon><IoCubeOutline size={43} /></SummaryIcon>
              <SummaryBody $top={2}>
                <Line><Link $size={13} $track={-0.4}>Build Artifacts</Link></Line>
                <Line>
                  <ArtifactIcon><FaRegFileAlt size={12} color="#666" /></ArtifactIcon>
                  <Segment $width={234}>
                    <Link $size={13} $track={-0.48}>com.github.vitalliuss.helloci.AppTest.txt</Link>
                  </Segment>
                  <Segment $width={46}><Text $track={-0.25} $color="#666">541 B</Text></Segment>
                  <Link $size={13} $track={-0.45}>view</Link>
                </Line>
              </SummaryBody>

              <SummaryIcon><IoCodeSlashOutline size={43} /></SummaryIcon>
              <SummaryBody $top={13.5}>
                <Line><Text $size={12.5} $track={-0.41} $color="#444">No changes.</Text></Line>
              </SummaryBody>

              <SummaryIcon><IoLocateOutline size={43} /></SummaryIcon>
              <SummaryBody $top={14.5}>
                <Line>
                  <Segment $width={84.5}><Text $size={12.5} $track={-0.54} $color="#444">Started by user</Text></Segment>
                  <UserLink $size={12.5} $track={-0.27}>Maryia Kaminskaya</UserLink>
                </Line>
              </SummaryBody>

              <SummaryIcon $top={12}>
                <GitLogo><SiGit size={18} color="#f4502b" /><GitWord>git</GitWord></GitLogo>
              </SummaryIcon>
              <SummaryBody>
                <Line $height={19}>
                  <Text $size={12.5} $weight={700} $track={-0.63}>Revision</Text>
                  <Segment $width={6.5}><Text $size={12.5}>:</Text></Segment>
                  <Text $size={12.5} $track={-0.51} $color="#444">71518a34152cb6c6039a2443ced60af30a31f14c</Text>
                </Line>
                <Line $height={19}>
                  <Text $size={12.5} $weight={700} $track={-0.53}>Repository</Text>
                  <Segment $width={6.5}><Text $size={12.5}>:</Text></Segment>
                  <Link $size={12.5} $track={-0.14}>https://github.com/vitalliuss/helloci.git</Link>
                </Line>
                <BranchList>
                  <li><Text $size={12.5} $track={-0.49} $color="#444">refs/remotes/origin/master</Text></li>
                </BranchList>
              </SummaryBody>
            </Summary>
          </BuildPanel>

          <SidePanel>
            <KeepButton><Text $size={11} $weight={700} $track={-0.41}>Keep this build forever</Text></KeepButton>
            <Line $height={19}><Text $size={12.5} $track={-0.4} $color="#444">Started 47 sec ago</Text></Line>
            <Line $height={19}>
              <Segment $width={29}><Text $size={12.5} $track={-0.7} $color="#444">Took</Text></Segment>
              <Link $size={12.5} $track={-0.42}>33 sec</Link>
            </Line>
          </SidePanel>
        </Page>

        <PageFooter>
          <Text $medium $track={0.1}>REST API</Text>
          <Text $medium $track={0.07}>Jenkins 2.345</Text>
        </PageFooter>

        <DownloadBar>
          <Download $width={237} $left={20}>
            <JavaIcon />
            <DownloadName><Text $size={13} $track={-0.26}>agent (1).jar</Text></DownloadName>
            <Chevron d="up" size={11} color="#5f6368" width={1.7} />
          </Download>
          <Download $width={233} $left={16}>
            <JavaIcon />
            <DownloadName><Text $size={13} $track={-0.38}>agent.jar</Text></DownloadName>
            <Chevron d="up" size={11} color="#5f6368" width={1.7} />
          </Download>
          <ShowAll><Text $medium $track={-0.25}>Показать все</Text></ShowAll>
          <DownloadClose><Cross size={12} width={1.6} color="#6b6e72" /></DownloadClose>
        </DownloadBar>

        <Taskbar>
          <Task $gap={0}><WindowsIcon /></Task>
          <Task $gap={3}><TaskSearchIcon /></Task>
          <Task><VsIcon /></Task>
          <Task><AimpIcon /></Task>
          <Task $active $open><ChromeIcon /></Task>
          <Task $open><FloppyIcon /></Task>
          <Task><ComputerIcon /></Task>
          <Task $open><FolderIcon /></Task>
          <Tray>
            <TrayIcon $width={22}><Chevron d="up" size={13} /></TrayIcon>
            <TrayIcon $width={24}><WarningIcon /></TrayIcon>
            <TrayIcon $width={26}><BatteryIcon /></TrayIcon>
            <TrayIcon $width={21}><WifiIcon /></TrayIcon>
            <TrayIcon $width={27}><SoundIcon /></TrayIcon>
            <Text $size={11.5} $track={-0.3}>ENG</Text>
            <Clock>
              <Text $size={11.5} $track={-0.55}>14:18</Text>
              <Text $size={11.5} $track={-0.5}>12.05.2022</Text>
            </Clock>
            <TrayIcon $width={37}><NoticeIcon /></TrayIcon>
            <DesktopEdge />
          </Tray>
        </Taskbar>
      </Screen>
    </>
  );
}
